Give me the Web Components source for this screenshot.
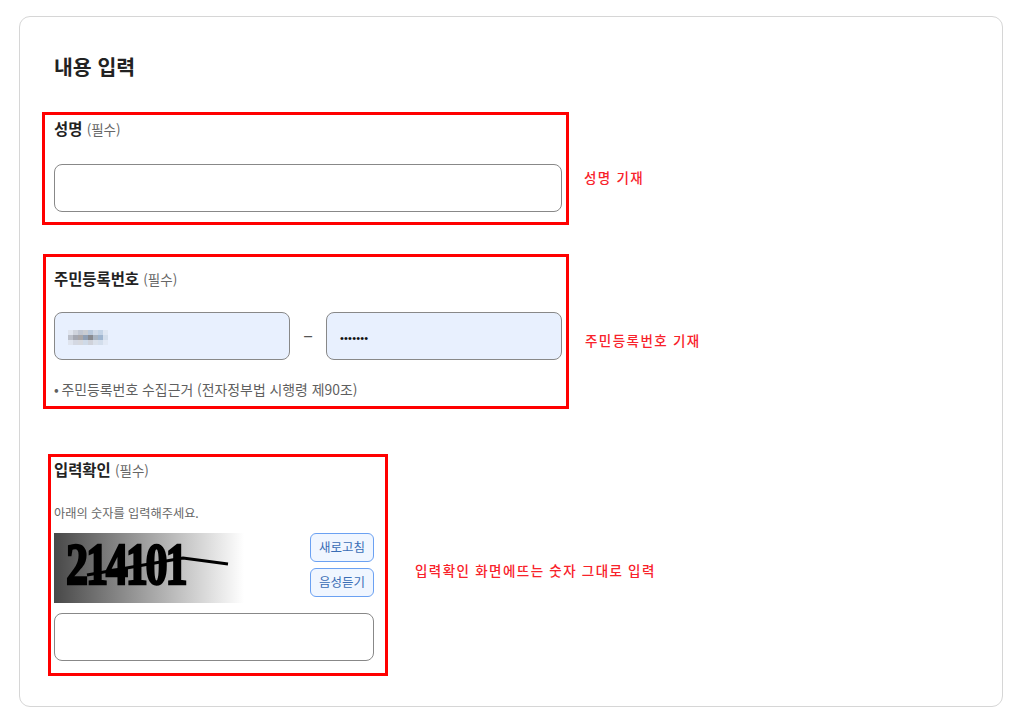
<!DOCTYPE html>
<html lang="ko"><head><meta charset="utf-8"><title>내용 입력</title>
<style>
html,body{margin:0;padding:0;background:#fff;font-family:"Noto Sans CJK KR","Noto Sans",sans-serif;}
body{padding:16px 21px 0 19px;height:714px;box-sizing:border-box;overflow:hidden}
</style></head><body>
<form-card heading="내용 입력">
  <note-row note="성명 기재" box="first">
    <form-field label="성명" gap="23">
      <text-box></text-box>
    </form-field>
  </note-row>
  <note-row note="주민등록번호 기재" box="second">
    <form-field label="주민등록번호" gap="21">
      <rrn-inputs></rrn-inputs>
      <p slot="after">•&#8201;주민등록번호 수집근거 (전자정부법 시행령 제90조)</p>
    </form-field>
  </note-row>
  <note-row note="입력확인 화면에뜨는 숫자 그대로 입력" box="third">
    <form-field label="입력확인" gap="22">
      <captcha-panel></captcha-panel>
    </form-field>
  </note-row>
</form-card>
<script>
function def(name, html, init){
  customElements.define(name, class extends HTMLElement{
    connectedCallback(){
      if(this.shadowRoot) return;
      const r=this.attachShadow({mode:'open'});
      r.innerHTML=html(this);
      if(init) init(r,this);
    }
  });
}
def('form-card',h=>`<style>
:host{display:block;box-sizing:border-box;height:691px;border:1px solid #d6d6d6;border-radius:11px;background:#fff;padding:35px 22px 0 22px}
h2{margin:0 0 32px 12px;font-size:20.5px;line-height:28px;font-weight:700;color:#222}
.stack{display:flex;flex-direction:column}
</style><h2>${h.getAttribute('heading')}</h2><div class="stack"><slot></slot></div>`);

const boxes={
 first:'margin:0 0 29px 0;--w:527px;--h:113px;--pl:9px;--pt:1px;--nt:55px;--nl:15px;',
 second:'margin:0 0 45px 1px;--w:526px;--h:155px;--pl:8px;--pt:9px;--nt:76px;--nl:16px;',
 third:'margin:0 0 0 6px;--w:340px;--h:222px;--pl:3px;--pt:0px;--nt:106px;--nl:27px;'
};
def('note-row',h=>`<style>
:host{display:flex;align-items:flex-start;${boxes[h.getAttribute('box')]}}
.box{box-sizing:border-box;width:var(--w);height:var(--h);border:3px solid #f00;padding:var(--pt) 0 0 var(--pl);flex:none}
.note{margin:var(--nt) 0 0 var(--nl);color:#f8222a;font-size:13.5px;line-height:20px;letter-spacing:1.45px;word-spacing:-.5px;font-weight:500;white-space:nowrap}
</style><div class="box"><slot></slot></div><div class="note">${h.getAttribute('note')}</div>`);

def('form-field',h=>`<style>
:host{display:block}
.l{font-size:15.4px;line-height:24px;font-weight:700;color:#222;white-space:nowrap}
.l span{font-size:13.5px;font-weight:400;color:#666}
.c{margin-top:${h.getAttribute('gap')}px}
::slotted(p){margin:19px 0 0;font-size:13.9px;line-height:20px;color:#5f5f5f;white-space:nowrap}
</style><div class="l">${h.getAttribute('label')} <span>(필수)</span></div><div class="c"><slot></slot></div><slot name="after"></slot>`);

def('text-box',h=>`<style>
:host{display:block;box-sizing:border-box;width:${h.getAttribute('w')||'508px'};height:48px;border:1px solid #888;border-radius:8px;background:${h.hasAttribute('filled')?'#e8f0fe':'#fff'};position:relative}
:host([filled]){display:flex;align-items:center;padding-left:13px}
</style><slot></slot>`);

def('rrn-inputs',h=>`<style>
:host{display:flex;align-items:center;width:508px}
.d{width:36px;text-align:center;color:#555;font-size:18px;line-height:20px;flex:none;margin-top:-4px}
.mosaic{display:grid;grid-template-columns:repeat(8,5px);grid-auto-rows:5px;filter:blur(.7px);margin-top:2px}
.mosaic i{display:block}
.dots{font-size:11px;letter-spacing:.2px;color:#111;line-height:1;font-family:"Liberation Sans",sans-serif;margin-top:4px}
</style>
<text-box w="236px" filled><div class="mosaic" id="m"></div></text-box>
<div class="d">–</div>
<text-box w="236px" filled><span class="dots">•••••••</span></text-box>`,
(r)=>{
 const c=['#dfe4ee','#cfd3dc','#c0c6d2','#c9ccd2','#b8c8dc','#cfd9e8','#c3d3e6','#dfe7f3',
          '#bcc0ca','#a5a8b2','#a9a6a8','#8f9fb5','#888a90','#a9b4c2','#9fb5cf','#d3deec',
          '#dfe4ee','#d4d8e2','#d6d8de','#cfdae8','#cfd2da','#d9e0ea','#d3deec','#e2e9f5'];
 r.getElementById('m').innerHTML=c.map(x=>`<i style="background:${x}"></i>`).join('');
});

def('captcha-panel',h=>`<style>
:host{display:block;width:320px}
p{margin:0 0 11px;font-size:12.2px;line-height:18px;color:#666;white-space:nowrap}
.row{display:flex;justify-content:space-between;align-items:flex-start;margin-bottom:10px}
.img{width:190px;height:70px;background:linear-gradient(90deg,#484848 0%,#fff 100%);position:relative;flex:none}
.num{position:absolute;left:12px;top:0;font-family:"Liberation Serif",serif;font-weight:700;font-size:59px;line-height:62px;letter-spacing:-3px;color:#000;-webkit-text-stroke:2.4px #000;filter:blur(.5px);transform:scaleX(.75);transform-origin:0 0;white-space:nowrap}
svg{position:absolute;left:0;top:0;filter:blur(.4px)}
.btns{display:flex;flex-direction:column;gap:6px}
button{box-sizing:border-box;width:64px;height:29px;padding:0;border:1px solid #6ba1f2;border-radius:6px;background:#f0f6ff;color:#3a6db5;font:400 12.5px/1 "Noto Sans CJK KR",sans-serif}
</style><p>아래의 숫자를 입력해주세요.</p>
<div class="row"><div class="img"><span class="num">214101</span>
<svg width="190" height="70"><path d="M33 42 L129 25 L174 31" fill="none" stroke="#000" stroke-width="3"/></svg></div>
<div class="btns"><button>새로고침</button><button>음성듣기</button></div></div>
<text-box w="320px"></text-box>`);
</script>
</body></html>
